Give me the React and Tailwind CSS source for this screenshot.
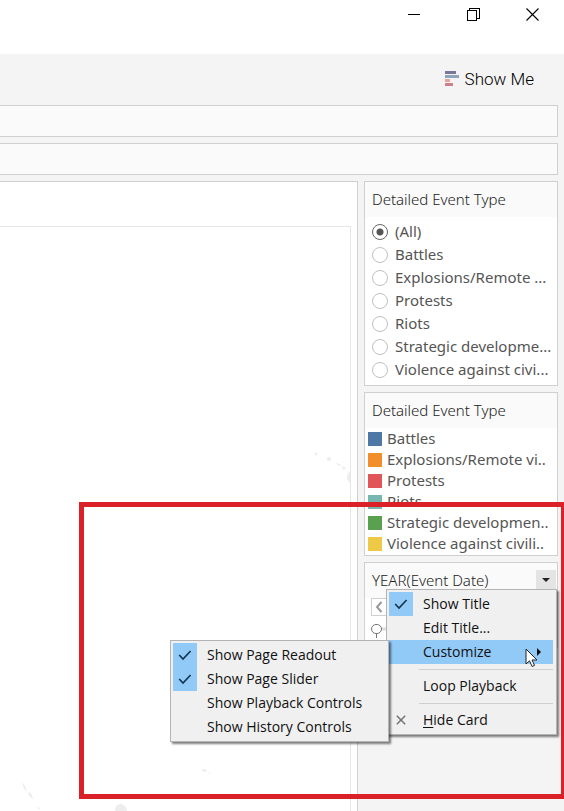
import React from "react";

const eventTypes = [
  "(All)",
  "Battles",
  "Explosions/Remote ...",
  "Protests",
  "Riots",
  "Strategic developme...",
  "Violence against civi...",
];

const legend = [
  { label: "Battles", color: "bg-[#4e79a7]" },
  { label: "Explosions/Remote vi..", color: "bg-[#f28e2b]" },
  { label: "Protests", color: "bg-[#e15759]" },
  { label: "Riots", color: "bg-[#76b7b2]" },
  { label: "Strategic developmen..", color: "bg-[#59a14f]" },
  { label: "Violence against civili..", color: "bg-[#edc948]" },
];

const titleFont = "font-['Noto_Sans',sans-serif] font-light";
const itemFont = "font-['Noto_Sans',sans-serif] font-normal";
const menuFont = "font-['Open_Sans',sans-serif]";

function TitleBar() {
  const button = "flex h-7 w-[59px] items-center justify-center";
  return (
    <header className="flex h-[54px] shrink-0 justify-end bg-white pr-0.5">
      <button className={button} aria-label="Minimize">
        <svg width="13" height="13" viewBox="0 0 13 13" shapeRendering="crispEdges">
          <path d="M0 6.500h12" stroke="#000" />
        </svg>
      </button>
      <button className={button} aria-label="Restore">
        <svg width="13" height="13" viewBox="0 0 13 13" fill="none" stroke="#000" shapeRendering="crispEdges">
          <path d="M.5 2.500h9v10h-9zM2.500 2.500v-2h10v9.500h-3" />
        </svg>
      </button>
      <button className={button} aria-label="Close">
        <svg width="13" height="13" viewBox="0 0 13 13" stroke="#000" strokeWidth="1.1">
          <path d="M.5.5l12 12M12.500.5l-12 12" />
        </svg>
      </button>
    </header>
  );
}

function Card({ title, children, className = "", action }) {
  return (
    <section className={`relative border border-[#d0d0d0] bg-white ${className}`}>
      <div className="flex h-[35px] items-center justify-between bg-[#fafafa] pb-0.5 pl-[7px]">
        <h2 className={`whitespace-nowrap text-[15px] leading-5 text-[#222] ${titleFont}`}>{title}</h2>
        {action}
      </div>
      {children}
    </section>
  );
}

function Check() {
  return (
    <svg width="14" height="11" viewBox="0 0 14 11" fill="none" stroke="#16364f" strokeWidth="1.7">
      <path d="M1.200 5l3.800 4L12.600 1" />
    </svg>
  );
}

function MenuItem({ children, checked, icon, active, submenu }) {
  return (
    <button
      role={checked ? "menuitemcheckbox" : "menuitem"}
      aria-checked={checked ? true : undefined}
      className={`flex h-6 w-full items-center text-left text-sm leading-5 text-[#111] ${active ? "bg-[#91c9f7]" : ""}`}
    >
      <span className={`flex size-6 shrink-0 items-center justify-center ${checked ? "bg-[#91c9f7]" : ""}`}>
        {checked ? <Check /> : icon}
      </span>
      <span className="flex-1 whitespace-nowrap pl-2.5">{children}</span>
      {submenu && (
        <svg className="mr-3" width="4" height="8" viewBox="0 0 4 8">
          <path d="M0 0l4 4-4 4z" fill="#111" />
        </svg>
      )}
    </button>
  );
}

function Separator() {
  return (
    <div className="flex h-2.5 items-center pl-[30px]" role="separator">
      <div className="h-px flex-1 bg-[#d0d0d0]" />
    </div>
  );
}

const menuBox = `absolute border border-[#b4b4b4] bg-[#f0f0f0] p-0.5 shadow-[2px_2px_2px_rgba(0,0,0,0.5)] ${menuFont}`;

function Submenu() {
  return (
    <div role="menu" className={`${menuBox} right-full top-0 w-[219px]`}>
      <MenuItem checked>Show Page Readout</MenuItem>
      <MenuItem checked>Show Page Slider</MenuItem>
      <MenuItem>Show Playback Controls</MenuItem>
      <MenuItem>Show History Controls</MenuItem>
    </div>
  );
}

function CardMenu() {
  return (
    <div role="menu" className={`${menuBox} right-0 top-[26px] w-[171px] pr-[3px]`}>
      <MenuItem checked>Show Title</MenuItem>
      <MenuItem>Edit Title...</MenuItem>
      <div className="relative">
        <MenuItem active submenu>Customize</MenuItem>
        <Submenu />
        <svg className="absolute left-[136px] top-2" width="13" height="20" viewBox="0 0 13 20">
          <path d="M1 1v15l3.500-3.200 2.600 5.700 2.400-1.100-2.500-5.400H12z" fill="#fff" stroke="#222" />
        </svg>
      </div>
      <Separator />
      <MenuItem>Loop Playback</MenuItem>
      <Separator />
      <MenuItem
        icon={
          <svg width="10" height="10" viewBox="0 0 10 10" stroke="#707070" strokeWidth="1.4">
            <path d="M.8.8l8.400 8.400M9.200.8L.8 9.200" />
          </svg>
        }
      >
        <span className="underline underline-offset-2">H</span>ide Card
      </MenuItem>
    </div>
  );
}

function MapView() {
  return (
    <main className="flex flex-1 flex-col border-r border-t border-[#d0d0d0] bg-white pr-1.5 pt-11">
      <div className="relative flex-1 border-r border-t border-[#e6e6e6]">
        <svg className="absolute right-0 top-0" width="350" height="584" viewBox="0 0 350 584" fill="#ededed">
          <circle cx="316" cy="227" r="1.5" />
          <circle cx="329" cy="232" r="2" />
          <path d="M337 236l4 2-1 1-4-2zM342 239l4 2-2 2-2-2z" />
          <path d="M350 244q-4 4-3 8l3 4z" />
          <path d="M202 542l5 1-1 2-4-1zM208 545l3 1-1 1z" />
          <path d="M22 555l3 4 2 5-3-2zM28 564l4 4 1 4-4-3zM36 567l1 6zM37 580l3 1-1 2z" />
          <path d="M115 584q0-7 6-7 5 1 6 7z" />
        </svg>
      </div>
    </main>
  );
}

export default function App() {
  return (
    <div className="relative flex min-h-screen flex-col overflow-hidden bg-[#f4f4f4]">
      <TitleBar />
      <div className="flex h-[51px] shrink-0 items-center justify-end pb-0.5 pr-[30px]">
        <button className="flex items-center gap-1.5 font-['Roboto',sans-serif] text-[17px] font-light leading-6 text-black">
          <svg width="14" height="16" viewBox="0 0 14 16">
            <path d="M0 0h11v3H0z" fill="#77779a" />
            <path d="M0 4h14v3H0z" fill="#8fa5bd" />
            <path d="M0 8h5v3H0z" fill="#e8a597" />
            <path d="M0 12h8v3H0z" fill="#cf7f86" />
          </svg>
          Show Me
        </button>
      </div>
      <div className="flex flex-1 flex-col gap-1.5 pr-1.5">
        <div className="h-8 border border-l-0 border-[#d0d0d0] bg-[#fafafa]" />
        <div className="h-8 border border-l-0 border-[#d0d0d0] bg-[#fafafa]" />
        <div className="flex flex-1 gap-1.5">
          <MapView />
          <aside className="flex w-[194px] shrink-0 flex-col gap-1.5">
            <Card title="Detailed Event Type">
              <div className={`pb-1 pl-[7px] pt-[3px] text-[15px] text-[#555] ${itemFont}`}>
                {eventTypes.map((label, i) => (
                  <label key={label} className="flex h-[23px] items-center gap-[7px] whitespace-nowrap">
                    <input
                      type="radio"
                      name="event-type"
                      defaultChecked={i === 0}
                      className="size-4 shrink-0 appearance-none rounded-full border border-[#c0c0c0] bg-white checked:border-[#666] checked:bg-[radial-gradient(circle,#555_3px,#fff_4px)]"
                    />
                    {label}
                  </label>
                ))}
              </div>
            </Card>
            <Card title="Detailed Event Type">
              <ul className={`pb-px pl-[3px] text-[15px] text-[#555] ${itemFont}`}>
                {legend.map(({ label, color }) => (
                  <li key={label} className="flex h-[21px] items-center gap-[5px] whitespace-nowrap">
                    <span className={`size-3.5 shrink-0 ${color}`} />
                    {label}
                  </li>
                ))}
              </ul>
            </Card>
            <Card
              title="YEAR(Event Date)"
              className="z-10 h-[86px] border-[#a8a8a8]"
              action={
                <button className="mr-px flex h-5 w-5 items-center justify-center bg-[#e4e4e4]" aria-label="Card menu">
                  <svg width="8" height="4" viewBox="0 0 8 4">
                    <path d="M0 0h8L4 4z" fill="#222" />
                  </svg>
                </button>
              }
            >
              <div className="flex flex-col items-start gap-2 pl-1.5">
                <button className="flex h-[18px] w-4 items-center justify-center border border-[#d0d0d0]" aria-label="Previous">
                  <svg width="8" height="12" viewBox="0 0 8 12" fill="none" stroke="#999" strokeWidth="2">
                    <path d="M6.500 1L2 6l4.500 5" />
                  </svg>
                </button>
                <svg width="16" height="14" viewBox="0 0 16 14" fill="none" stroke="#777">
                  <path d="M10 5h6" stroke="#ddd" strokeWidth="3" />
                  <path d="M.5 5a4.500 4.500 0 0 1 4.500-4.500h1a4.500 4.500 0 0 1 4.500 4.500 4.500 4.500 0 0 1-4.500 4.500H5A4.500 4.500 0 0 1 .5 5zM5.500 9.500V14" fill="#fff" />
                </svg>
              </div>
              <CardMenu />
            </Card>
          </aside>
        </div>
      </div>
      <div className="pointer-events-none absolute left-[79px] top-[502px] -right-[2px] h-[297px] border-5 border-[#da2128]" />
    </div>
  );
}
